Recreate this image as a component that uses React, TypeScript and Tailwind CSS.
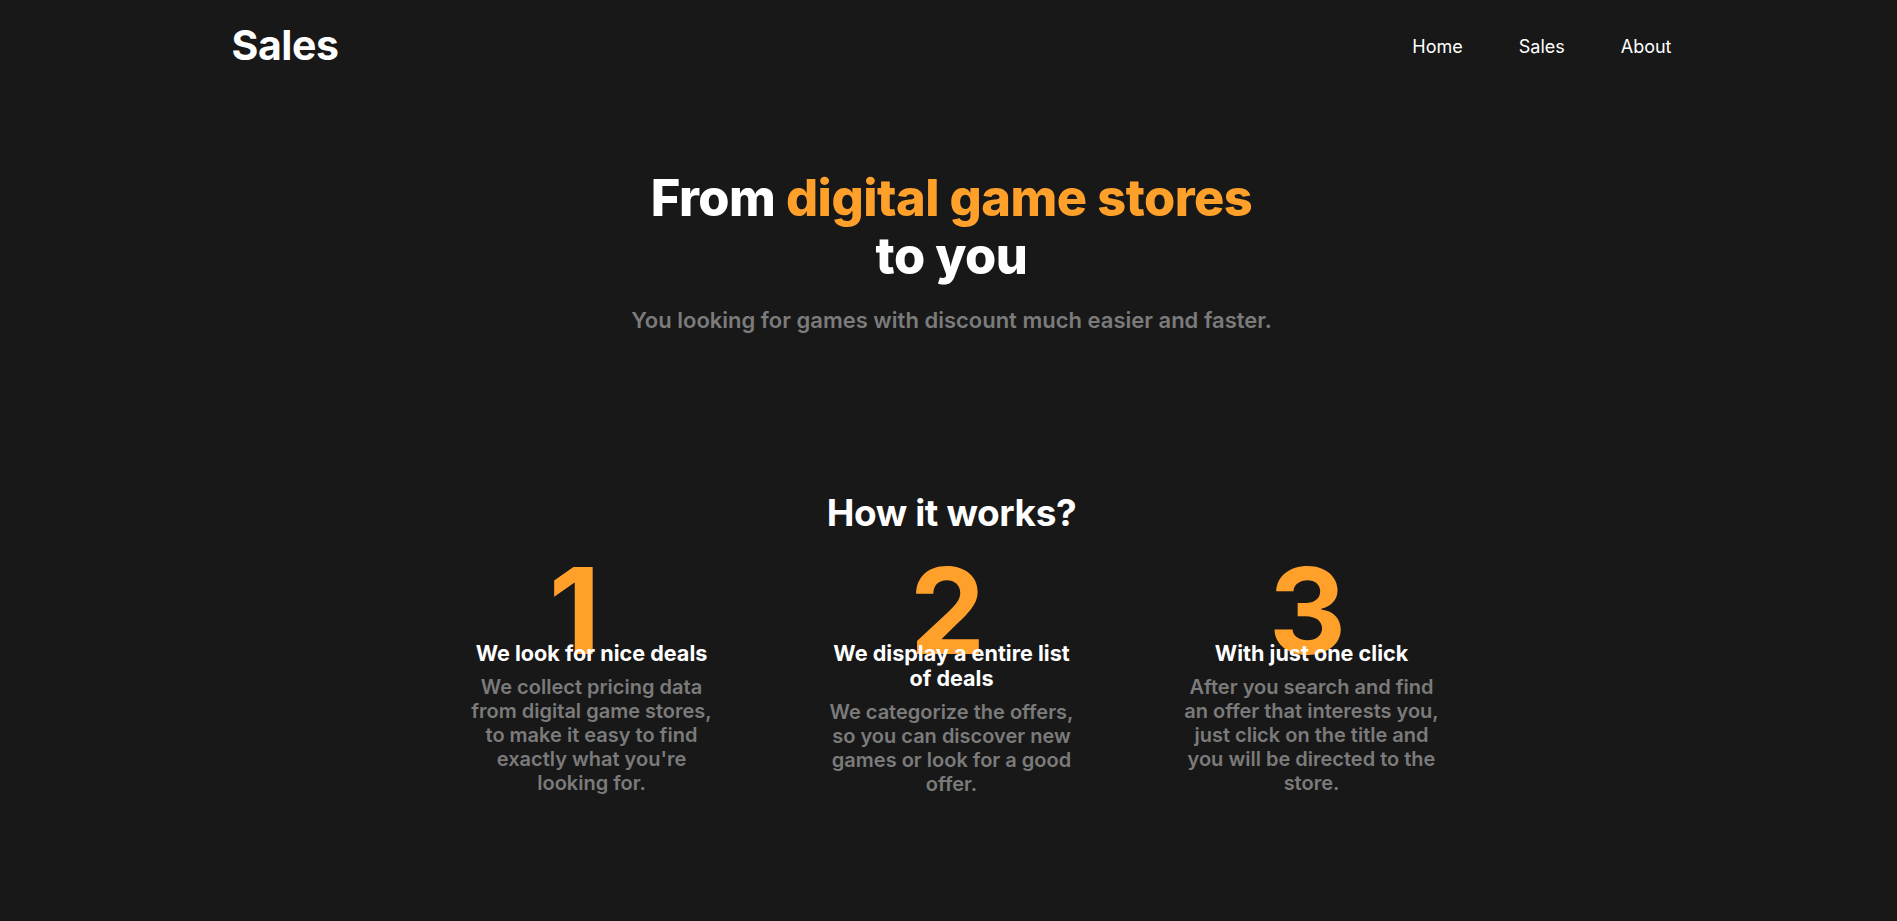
const steps = [
  {
    n: "1",
    shift: "pr-[34px]",
    title: "We look for nice deals",
    text: "We collect pricing data from digital game stores, to make it easy to find exactly what you're looking for.",
  },
  {
    n: "2",
    shift: "pr-[8px]",
    title: "We display a entire list of deals",
    text: "We categorize the offers, so you can discover new games or look for a good offer.",
  },
  {
    n: "3",
    shift: "pr-[8px]",
    title: "With just one click",
    text: "After you search and find an offer that interests you, just click on the title and you will be directed to the store.",
  },
];

const App = () => {
  return (
    <div className="min-h-screen w-full bg-[#181818] pl-[6px] font-['Inter','Liberation_Sans',sans-serif] text-white">
      <header className="mx-auto flex w-[1440px] items-center justify-between py-[19px]">
        <a href="#" className="text-[41px] font-bold leading-[52px] tracking-[-0.01em]">
          Sales
        </a>
        <nav className="mt-[3px] flex items-center gap-[56px] text-[18px]">
          <a href="#">Home</a>
          <a href="#">Sales</a>
          <a href="#">About</a>
        </nav>
      </header>

      <section className="mt-[79px] flex flex-col items-center text-center">
        <h1 className="text-[50.5px] font-extrabold leading-[57.6px] tracking-[-0.01em]">
          From <span className="text-[#ffa02b]">digital game stores</span>
          <br />
          to you
        </h1>
        <p className="mt-[20px] text-[22px] font-semibold leading-[32px] text-[#7b7b7b]">
          You looking for games with discount much easier and faster.
        </p>
      </section>

      <section className="mt-[155px] flex flex-col items-center">
        <h2 className="text-[37px] font-bold leading-[43px] tracking-[-0.01em]">How it works?</h2>
        <div className="mt-[47px] flex gap-[100px]">
          {steps.map((s) => (
            <div key={s.n} className="flex w-[260px] flex-col items-center text-center">
              <div className={`h-[60px] text-[120px] font-bold leading-[60px] text-[#ffa02b] ${s.shift}`}>{s.n}</div>
              <h3 className="relative text-[21.6px] font-bold leading-[25px]">{s.title}</h3>
              <p className="mt-[9px] text-[20px] font-semibold leading-[24px] text-[#7b7b7b]">{s.text}</p>
            </div>
          ))}
        </div>
      </section>
    </div>
  );
};

export default App;
